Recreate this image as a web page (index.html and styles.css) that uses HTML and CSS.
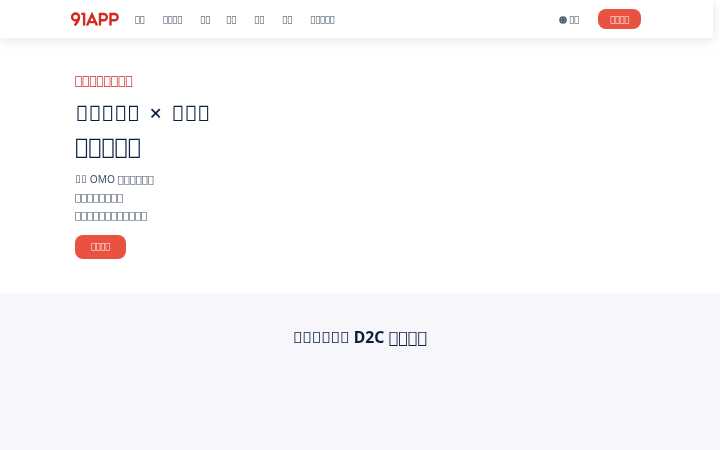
FILE: index.html
```
<!DOCTYPE html>
<html lang="zh-Hant"><head><meta charset="utf-8"><title>91APP</title><link rel="stylesheet" href="styles.css"></head><body>
<header class="bar">
<svg class="logo" viewBox="0 0 48 15" role="img" aria-label="91APP"><g fill="none" stroke="#d32a1d" stroke-width="2.4"><circle cx="4.6" cy="5" r="3.5"/><path d="M7.9 5.9C7.5 9 5.7 11.5 3.6 13.4M10.3 1.9h2.8v11.7M16 13.6L21 2.5l5 11.1M18 10.1h6M29 13.6V2h3.7a3.1 3.1 0 0 1 0 6.3H29M39.5 13.6V2h4a3.1 3.1 0 0 1 0 6.3h-4"/></g></svg>
<nav class="nav"><a>&#xE123;&#xE123;</a><a>&#xE123;&#xE123;&#xE123;&#xE123;</a><a>&#xE123;&#xE123;</a><a class="near">&#xE123;&#xE123;</a><a>&#xE123;&#xE123;</a><a>&#xE123;&#xE123;</a><a>&#xE123;&#xE123;&#xE123;&#xE123;&#xE123;</a></nav>
<div class="lang"><svg class="globe" viewBox="0 0 16 16"><circle cx="8" cy="8" r="7.5" fill="#33475b"/><g fill="none" stroke="#fff" stroke-width="1" opacity=".6"><ellipse cx="8" cy="8" rx="3.3" ry="7.5"/><path d="M1 5.5h14M1 10.5h14"/></g></svg><span>&#xE123;&#xE123;</span></div>
<a class="btn small">&#xE123;&#xE123;&#xE123;&#xE123;</a>
</header>
<main>
<section class="hero">
<p class="eyebrow">&#xE123;&#xE123;&#xE123;&#xE123;&#xE123;&#xE123;&#xE123;&#xE123;</p>
<h1><span class="noto">&#xE123;&#xE123;&#xE123;&#xE123;&#xE123; × &#xE123;&#xE123;&#xE123;</span><br>&#xE123;&#xE123;&#xE123;&#xE123;&#xE123;</h1>
<p class="copy"><span class="noto">&#xE123;&#xE123; OMO </span>&#xE123;&#xE123;&#xE123;&#xE123;&#xE123;&#xE123;<br>&#xE123;&#xE123;&#xE123;&#xE123;&#xE123;&#xE123;&#xE123;&#xE123;<br>&#xE123;&#xE123;&#xE123;&#xE123;&#xE123;&#xE123;&#xE123;&#xE123;&#xE123;&#xE123;&#xE123;&#xE123;</p>
<a class="btn">&#xE123;&#xE123;&#xE123;&#xE123;</a>
</section>
<section class="d2c"><h2><span class="noto">&#xE123;&#xE123;&#xE123;&#xE123;&#xE123;&#xE123; <b>D2C</b> </span>&#xE123;&#xE123;&#xE123;&#xE123;</h2></section>
</main>
</body></html>
```

FILE: styles.css
```
*{box-sizing:border-box}
body{margin:0;height:450px;overflow:hidden;background:#fff;color:#0b1f3f;font-family:"DejaVu Sans",sans-serif;display:flex;flex-direction:column}
h1,h2,p{margin:0;font-weight:400}
.noto{font-family:"Noto Sans",sans-serif}
.bar{width:713px;height:38px;flex:none;display:flex;align-items:center;padding-left:71px;background:#fff;box-shadow:0 2px 12px rgba(0,0,0,.11);font-size:8px;color:#26384e}
.logo{width:48px;height:15px;flex:none}
.nav{display:flex;gap:18.4px;margin-left:16px;width:424.3px;line-height:10px;padding-top:2px}
.near{margin-left:-2px}
.nav,.lang,.hero,h2{will-change:transform}
.lang{display:flex;align-items:center;gap:2.5px;width:39px}
.globe{width:8px;height:8px}
.btn{display:flex;align-items:center;justify-content:center;width:51px;height:24px;border-radius:8px;background:#e95140;color:#fff;font-size:8px}
.small{width:43px;height:20px;border-radius:8px}
.hero{height:255px;padding:35px 75px 0}
.eyebrow{font-size:12px;line-height:16px;color:#cf2a20}
h1{font-size:22px;line-height:33px;margin-top:7px}
h1 .noto{font-size:21.6px;font-weight:500;word-spacing:4px;padding-left:.5px}
.copy{font-size:10px;line-height:18.2px;margin:7px 0 9px;color:#435064}
.copy .noto{font-size:10.2px}
.d2c{height:157px;background:#f6f6fb;padding-top:32px;text-align:center}
h2{font-size:16px;line-height:24px}
h2 .noto{font-size:15.7px}
```
